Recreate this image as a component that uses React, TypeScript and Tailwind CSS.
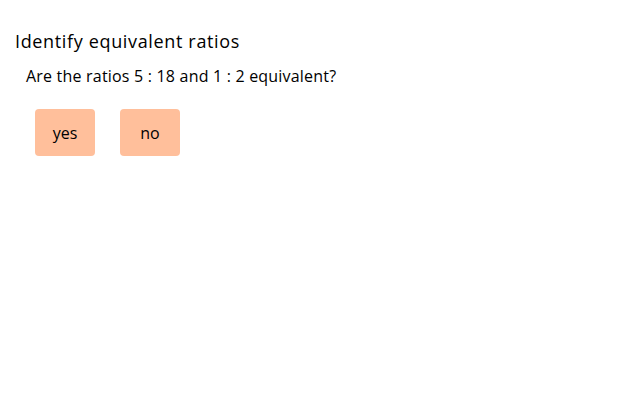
export default function App() {
  return (
    <div className="min-h-screen bg-white text-black" style={{ fontFamily: '"Open Sans", sans-serif' }}>
      <div className="px-[15px] pt-[28px]">
        <h1 className="text-[18px] font-medium tracking-[0.65px] leading-[26px]">Identify equivalent ratios</h1>
        <div className="pl-[11px] pt-[11px]">
          <p className="text-[16px] tracking-[0.2px] leading-[23px]">Are the ratios 5 : 18 and 1 : 2 equivalent?</p>
          <div className="flex gap-[25px] pl-[9px] pt-[21px]">
            <button className="w-[60px] h-[47px] rounded-[4px] bg-[#ffbf9b] text-[16px] font-medium">yes</button>
            <button className="w-[60px] h-[47px] rounded-[4px] bg-[#ffbf9b] text-[16px] font-medium">no</button>
          </div>
        </div>
      </div>
    </div>
  );
}
